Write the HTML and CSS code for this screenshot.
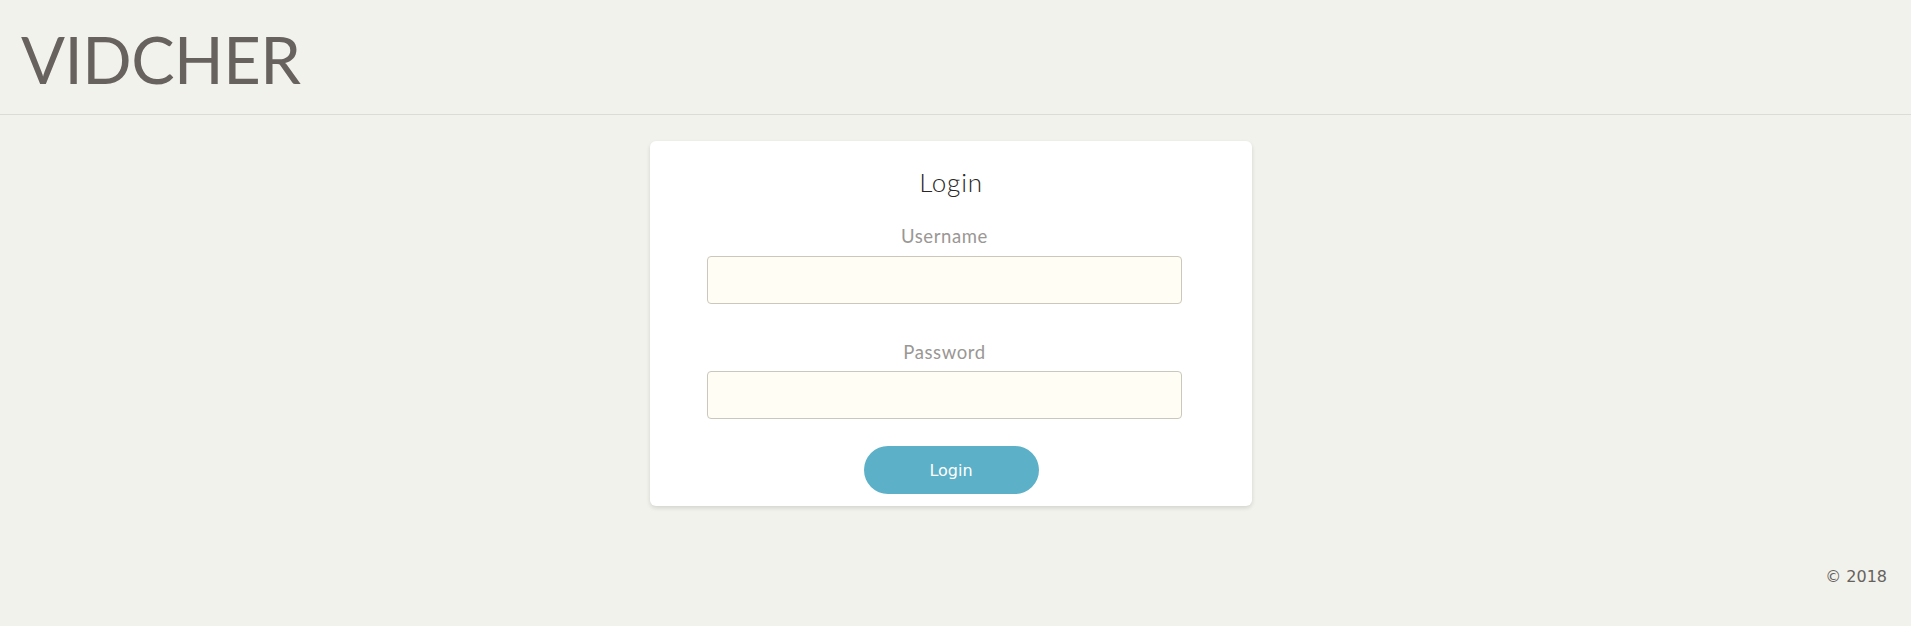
FILE: index.html
```html
<!DOCTYPE html>
<html lang="en">
<head>
<meta charset="utf-8">
<title>VIDCHER</title>
<link rel="stylesheet" href="styles.css">
</head>
<body>
<header class="topbar">
  <h1 class="brand">VIDCHER</h1>
</header>
<main class="main">
  <form class="card">
    <h2 class="card-title">Login</h2>
    <div class="fields">
      <label class="field-label" for="username">Username</label>
      <input class="field-input" id="username" type="text">
      <label class="field-label field-label-gap" for="password">Password</label>
      <input class="field-input" id="password" type="password">
    </div>
    <button class="btn-login" type="button">Login</button>
  </form>
</main>
<footer class="footer">© 2018</footer>
</body>
</html>
```

FILE: styles.css
```css
html, body {
  margin: 0;
  padding: 0;
}
body {
  background: #f2f2ed;
  font-family: Lato, "Open Sans", sans-serif;
  color: #67625d;
}
.topbar {
  height: 114px;
  border-bottom: 1px solid #dcdcd7;
  display: flex;
  align-items: center;
  padding-left: 21px;
}
.brand {
  margin: 0;
  font-weight: 400;
  font-size: 65px;
  line-height: 1;
  color: #67625d;
  letter-spacing: -0.5px;
  padding-top: 4px;
}
.main {
  display: flex;
  justify-content: center;
  padding-top: 26px;
  padding-right: 9px;
}
.card {
  width: 602px;
  box-sizing: border-box;
  background: #fff;
  border-radius: 6px;
  box-shadow: 0 2px 4px rgba(0, 0, 0, 0.13);
  padding: 25px 0 12px;
  display: flex;
  flex-direction: column;
  align-items: center;
}
.card-title {
  margin: 0;
  font-weight: 300;
  font-size: 26px;
  line-height: 32px;
  letter-spacing: 0.8px;
  color: #2a2624;
}
.fields {
  align-self: stretch;
  display: flex;
  flex-direction: column;
  align-items: center;
  padding: 0 70px 0 57px;
  margin-top: 26px;
}
.field-label {
  font-size: 18.5px;
  line-height: 24px;
  letter-spacing: 0.6px;
  color: #9a9794;
  margin-bottom: 8px;
}
.field-label-gap {
  margin-top: 36px;
  margin-bottom: 7px;
}
.field-input {
  width: 100%;
  height: 48px;
  box-sizing: border-box;
  background: #fffdf4;
  border: 1px solid #cbc7ba;
  border-radius: 4px;
  margin: 0;
  padding: 0 12px;
  font: inherit;
}
.btn-login {
  margin-top: 27px;
  width: 175px;
  height: 48px;
  border: none;
  border-radius: 24px;
  background: #5cb0c8;
  color: #fff;
  font-family: "DejaVu Sans", sans-serif;
  font-size: 16px;
  padding: 0;
}
.footer {
  margin-top: 61px;
  padding-right: 24px;
  text-align: right;
  font-family: "DejaVu Sans", sans-serif;
  font-size: 16px;
  line-height: 19px;
  color: #67625d;
}
```
